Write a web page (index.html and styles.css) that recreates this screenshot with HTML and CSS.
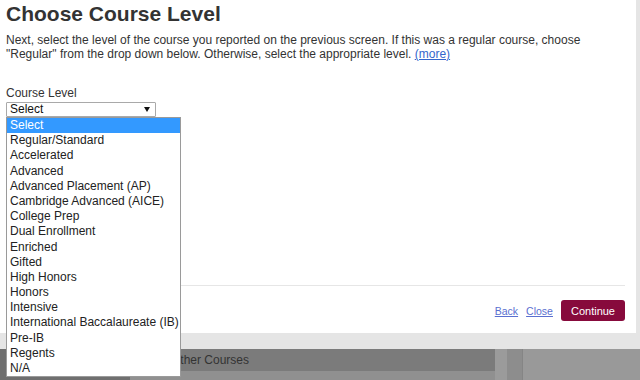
FILE: index.html
```html
<!DOCTYPE html>
<html>
<head>
<meta charset="utf-8">
<link rel="stylesheet" href="styles.css">
</head>
<body>
<div class="overlay">
  <div class="modal">
    <h1 class="title">Choose Course Level</h1>
    <p class="intro">Next, select the level of the course you reported on the previous screen. If this was a regular course, choose "Regular" from the drop down below. Otherwise, select the appropriate level. <a class="more" href="#">(more)</a></p>
    <div class="field">
      <div class="label">Course Level</div>
      <div class="select-wrap">
        <div class="select"><span>Select</span><span class="arrow"></span></div>
        <ul class="listbox">
          <li class="opt active">Select</li>
          <li class="opt">Regular/Standard</li>
          <li class="opt">Accelerated</li>
          <li class="opt">Advanced</li>
          <li class="opt">Advanced Placement (AP)</li>
          <li class="opt">Cambridge Advanced (AICE)</li>
          <li class="opt">College Prep</li>
          <li class="opt">Dual Enrollment</li>
          <li class="opt">Enriched</li>
          <li class="opt">Gifted</li>
          <li class="opt">High Honors</li>
          <li class="opt">Honors</li>
          <li class="opt">Intensive</li>
          <li class="opt">International Baccalaureate (IB)</li>
          <li class="opt">Pre-IB</li>
          <li class="opt">Regents</li>
          <li class="opt">N/A</li>
        </ul>
      </div>
    </div>
    <div class="footer">
      <a class="link" href="#">Back</a>
      <a class="link" href="#">Close</a>
      <button class="continue">Continue</button>
    </div>
  </div>
</div>
<div class="behind">
  <div class="side"></div>
  <div class="main">
    <div class="bar">Other Courses</div>
  </div>
  <div class="gutter-a"></div>
  <div class="gutter-b"></div>
  <div class="rest"></div>
</div>
</body>
</html>
```
FILE: styles.css
```css
html, body {
  margin: 0;
  padding: 0;
}
body {
  width: 640px;
  height: 380px;
  overflow: hidden;
  background: #999999;
  font-family: "Liberation Sans", Arial, sans-serif;
  font-size: 12px;
  color: #333333;
}
.overlay {
  background: #e5e5e5;
  padding: 0 4px 16px 0;
}
.modal {
  position: relative;
  z-index: 2;
  background: #ffffff;
  height: 333px;
  box-sizing: border-box;
  padding: 2px 11px 0 6px;
  display: flex;
  flex-direction: column;
}
.title {
  margin: 0;
  font-size: 21px;
  font-weight: bold;
  line-height: 24px;
  color: #333333;
}
.intro {
  margin: 7px 0 0 0;
  line-height: 14px;
}
.more {
  color: #3366cc;
}
.field {
  margin-top: 25px;
}
.label {
  line-height: 14px;
}
.select-wrap {
  position: relative;
  margin-top: 2px;
  width: 150px;
}
.select {
  box-sizing: border-box;
  height: 15px;
  border: 1px solid #a9a9a9;
  border-radius: 1px;
  padding: 0 0 0 3px;
  display: flex;
  align-items: center;
  justify-content: space-between;
  color: #111111;
  line-height: 13px;
  font-size: 12px;
}
.arrow {
  width: 0;
  height: 0;
  border-left: 3px solid transparent;
  border-right: 3px solid transparent;
  border-top: 5px solid #111111;
  margin-right: 5px;
}
.listbox {
  position: absolute;
  left: 0;
  top: 15px;
  width: 175px;
  box-sizing: border-box;
  margin: 0;
  padding: 0;
  list-style: none;
  background: #ffffff;
  border: 1px solid #9a9a9a;
  z-index: 5;
}
.opt {
  height: 15.2px;
  line-height: 15.2px;
  padding-left: 3px;
  color: #222222;
  white-space: nowrap;
}
.opt.active {
  background: #3399ff;
  color: #ffffff;
}
.footer {
  margin-top: auto;
  border-top: 1px solid #e6e6e6;
  padding: 14px 0 12px 0;
  display: flex;
  justify-content: flex-end;
  align-items: center;
  gap: 8px;
}
.link {
  font-size: 10.5px;
  color: #5a6fd0;
  text-decoration: underline;
}
.continue {
  font-family: "Liberation Sans", Arial, sans-serif;
  font-size: 11px;
  height: 21px;
  padding: 0 10px 0 10px;
  border: none;
  border-radius: 3px;
  background: #870a3c;
  color: #ffffff;
}
.behind {
  display: flex;
  height: 31px;
}
.side {
  width: 130px;
  background: #6f6f6f;
}
.main {
  width: 365px;
  background: #909090;
}
.bar {
  height: 22px;
  background: #7b7b7b;
  line-height: 22px;
  padding-left: 41px;
  color: #333333;
  font-size: 12px;
}
.gutter-a {
  width: 12px;
  background: #9b9b9b;
}
.gutter-b {
  width: 15px;
  background: #8d8d8d;
  border-right: 1px solid #858585;
}
.rest {
  flex: 1;
  background: #999999;
}
```
